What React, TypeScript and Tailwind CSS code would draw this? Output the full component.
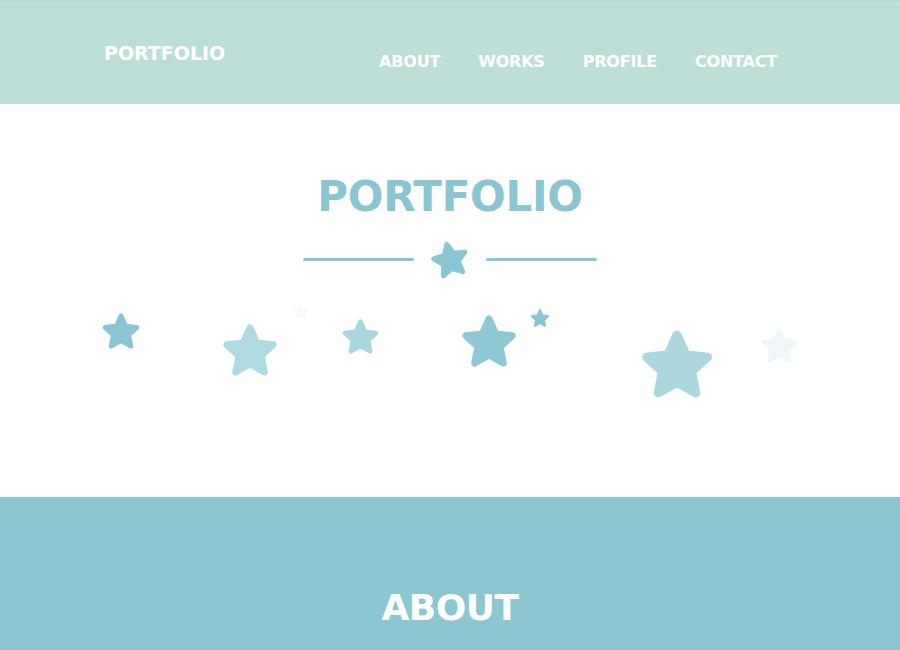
import React from "react";

const starPoints = (() => {
  const pts: string[] = [];
  for (let i = 0; i < 10; i++) {
    const r = i % 2 === 0 ? 42 : 20;
    const a = (Math.PI / 5) * i - Math.PI / 2;
    pts.push(`${(50 + r * Math.cos(a)).toFixed(2)},${(54 + r * Math.sin(a)).toFixed(2)}`);
  }
  return pts.join(" ");
})();

const Star: React.FC<{ size: number; color: string; className?: string }> = ({
  size,
  color,
  className,
}) => (
  <svg width={size} height={size} viewBox="0 0 100 100" className={className}>
    <polygon
      points={starPoints}
      fill={color}
      stroke={color}
      strokeWidth={12}
      strokeLinejoin="round"
    />
  </svg>
);

// scattered stars (center x/y in page coords, size, colour)
const stars = [
  { x: 121, y: 331, s: 40, c: "#8ac6d1" },
  { x: 250, y: 350, s: 58, c: "#b0dae1" },
  { x: 301, y: 311, s: 18, c: "#f4f9fb" },
  { x: 360, y: 336, s: 39, c: "#aad6de" },
  { x: 489, y: 341, s: 58, c: "#8fc8d3" },
  { x: 540, y: 318, s: 20, c: "#8ac6d1" },
  { x: 677, y: 364, s: 76, c: "#acd7df" },
  { x: 779, y: 345, s: 39, c: "#f0f7fa" },
];

export default function App() {
  return (
    <div className="w-[900px] h-[650px] overflow-hidden bg-white font-['DejaVu_Sans',sans-serif]">
      {/* Header */}
      <header className="h-[104px] bg-[#bbdfd7] border-t border-[#cfcfcf] flex items-start">
        <div className="pl-[104px] pt-[38px] text-white font-bold text-[19px]">
          PORTFOLIO
        </div>
        <nav className="ml-auto mr-[123px] pt-[49px] flex gap-[38px] text-white font-bold text-[16px] tracking-[-0.2px]">
          <span>ABOUT</span>
          <span>WORKS</span>
          <span>PROFILE</span>
          <span>CONTACT</span>
        </nav>
      </header>

      {/* Hero */}
      <section className="relative h-[393px]">
        <h1 className="pt-[63px] text-center text-[#8ac6d1] font-bold text-[42px] leading-[60px] tracking-[-0.3px]">
          PORTFOLIO
        </h1>
        <div className="mt-[12px] flex items-center justify-center gap-[16px]">
          <div className="w-[111px] h-[3px] rounded-full bg-[#8ac6d1]" />
          <Star size={40} color="#8ac6d1" className="-rotate-[12deg]" />
          <div className="w-[111px] h-[3px] rounded-full bg-[#8ac6d1]" />
        </div>
        {stars.map((st, i) => (
          <div
            key={i}
            className="absolute"
            style={{ left: st.x - st.s / 2, top: st.y - 104 - st.s / 2 }}
          >
            <Star size={st.s} color={st.c} />
          </div>
        ))}
      </section>

      {/* About */}
      <section className="bg-[#8bc6d1] h-[153px] flex justify-center">
        <h2 className="pt-[88px] text-white font-bold text-[36px] leading-[46px] tracking-[-0.5px]">
          ABOUT
        </h2>
      </section>
    </div>
  );
}
